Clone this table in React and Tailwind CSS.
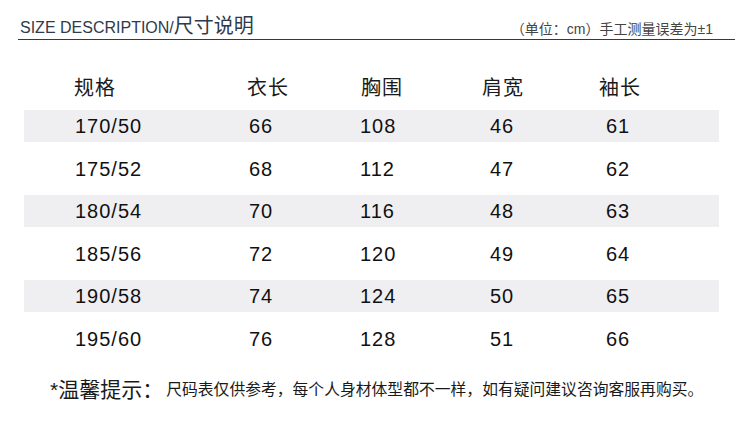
import React from "react";

const rows = [
  ["170/50", "66", "108", "46", "61"],
  ["175/52", "68", "112", "47", "62"],
  ["180/54", "70", "116", "48", "63"],
  ["185/56", "72", "120", "49", "64"],
  ["190/58", "74", "124", "50", "65"],
  ["195/60", "76", "128", "51", "66"],
];

const font = { fontFamily: '"Liberation Sans", "Noto Sans CJK SC", sans-serif' };

export default function App() {
  return (
    <div className="w-[750px] h-[436px] bg-white overflow-hidden" style={font}>
      {/* header */}
      <div className="ml-[18px] mr-[15px] h-[40px] border-b border-[#2f3a4b] flex items-end justify-between">
        <div className="pl-[2px] text-[#2e3a4d] leading-[20px] whitespace-nowrap mb-[1px]">
          <span className="text-[16px]">SIZE DESCRIPTION/</span>
          <span className="text-[20px]">尺寸说明</span>
        </div>
        <div className="text-[14px] leading-[18px] text-[#444] pr-[22px] whitespace-nowrap mb-[1px]">
          （单位：cm）手工测量误差为±1
        </div>
      </div>

      {/* table */}
      <div className="mt-[25px] ml-[24px] w-[695px]">
        <div className="h-[45px] flex items-center text-[20px] tracking-[1px] text-[#1a1a1a] pl-[50px]">
          <div className="w-[173px]">规格</div>
          <div className="w-[114px]">衣长</div>
          <div className="w-[121px]">胸围</div>
          <div className="w-[117px]">肩宽</div>
          <div className="flex-1">袖长</div>
        </div>
        {rows.map((r, i) => (
          <div key={i} className="h-[42.5px]">
            <div
              className={
                "h-[32px] flex items-center text-[20px] tracking-[1px] text-[#111] pl-[50px] " +
                (i % 2 === 0 ? "bg-[#efeff1]" : "bg-white")
              }
            >
              <div className="w-[173px] pl-[1px]">{r[0]}</div>
              <div className="w-[114px] pl-[2px]">{r[1]}</div>
              <div className="w-[121px] -ml-[1px]">{r[2]}</div>
              <div className="w-[117px] pl-[9px]">{r[3]}</div>
              <div className="flex-1 pl-[8px]">{r[4]}</div>
            </div>
          </div>
        ))}
      </div>

      {/* footer */}
      <div className="mt-[11px] ml-[50px] flex items-center whitespace-nowrap text-[#1a1a1a]">
        <span className="text-[21px] leading-[28px]">*温馨提示：</span>
        <span className="text-[15.8px] leading-[28px] ml-[3px]">
          尺码表仅供参考，每个人身材体型都不一样，如有疑问建议咨询客服再购买。
        </span>
      </div>
    </div>
  );
}
